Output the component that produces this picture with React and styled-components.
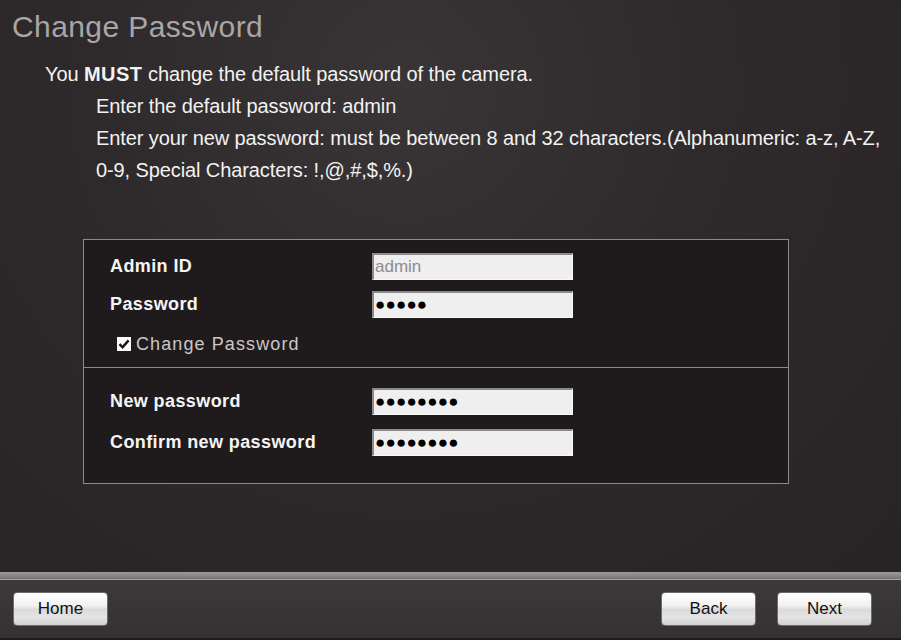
import React from 'react'
import styled, { createGlobalStyle } from 'styled-components'

const GlobalStyle = createGlobalStyle`
  html, body {
    margin: 0;
    padding: 0;
    background: #2b2728;
  }
  body {
    font-family: "Liberation Sans", Arial, sans-serif;
  }
`;

export const Page = styled.div`
  width: 901px;
  height: 640px;
  display: flex;
  flex-direction: column;
  overflow: hidden;
`;

export const Main = styled.div`
  height: 572px;
  box-sizing: border-box;
  background: radial-gradient(ellipse at 45% 15%, #393536 0%, #2e2a2b 45%, #282425 100%);
  display: flex;
  flex-direction: column;
`;

export const Title = styled.h1`
  margin: 10px 0 0 12px;
  font-size: 30px;
  line-height: 34px;
  font-weight: 400;
  letter-spacing: 0.4px;
  color: #a8a6a6;
`;

export const Intro = styled.div`
  margin: 14px 0 0 45px;
  font-size: 20px;
  line-height: 32px;
  letter-spacing: -0.1px;
  color: #f2f2f2;

  b {
    font-weight: 700;
    letter-spacing: 0.5px;
  }
`;

export const Indent = styled.div`
  padding-left: 51px;
`;

export const Box = styled.div`
  margin: 53px 0 0 83px;
  width: 706px;
  box-sizing: border-box;
  border: 1px solid #8d8a8a;
  background: #1f1b1c;
`;

export const Section = styled.div`
  padding: ${p => p.$pad};
  border-top: ${p => (p.$divided ? '1px solid #8d8a8a' : 'none')};
  display: grid;
  grid-template-columns: 262px 201px;
  row-gap: ${p => p.$gap}px;
  padding-left: 26px;
`;

export const Label = styled.label`
  font-size: 18px;
  font-weight: 700;
  letter-spacing: 0.4px;
  color: #f4f4f4;
  display: flex;
  align-items: center;
`;

export const Field = styled.div`
  height: 27px;
  box-sizing: border-box;
  background: #efefef;
  border-top: 2px solid #8a8a8a;
  border-left: 2px solid #8a8a8a;
  border-right: 1px solid #f8f8f8;
  border-bottom: 1px solid #f8f8f8;
  padding-left: 1px;
  display: flex;
  align-items: center;
  font-size: 17px;
  color: ${p => (p.$muted ? '#8c8c8c' : '#000')};
  letter-spacing: ${p => (p.$dots ? '0.2px' : '0')};
  overflow: hidden;
  white-space: nowrap;
`;

export const CheckRow = styled.div`
  grid-column: 1 / -1;
  margin-top: 4px;
  padding-left: 7px;
  height: 22px;
  display: flex;
  align-items: center;
  gap: 5px;
  font-size: 18px;
  letter-spacing: 1.1px;
  color: #c9c7c7;
`;

export const CheckBox = styled.span`
  width: 14px;
  height: 14px;
  background: #fafafa;
  display: flex;
  align-items: center;
  justify-content: center;
`;

export const Rule = styled.div`
  height: 8px;
  box-sizing: border-box;
  background: linear-gradient(#9a9898, #868484 60%, #6f6d6d);
  border-bottom: 1px solid #a5a3a3;
`;

export const Footer = styled.div`
  flex: 1;
  background: linear-gradient(#3c393a, #353132);
  border-bottom: 2px solid #1e1b1c;
  display: flex;
  align-items: flex-start;
  padding: 12px 29px 0 13px;
  gap: 21px;
`;

export const Spacer = styled.div`
  flex: 1;
`;

export const Button = styled.button`
  width: 95px;
  height: 34px;
  box-sizing: border-box;
  border: 1px solid #6c6a6a;
  border-radius: 4px;
  background: linear-gradient(#ffffff 0%, #f1f1f1 40%, #d9d9d9 52%, #e4e4e4 75%, #d2d2d2 100%);
  box-shadow: inset 0 1px 0 #fff;
  font-family: "Liberation Sans", Arial, sans-serif;
  font-size: 17px;
  color: #111;
  padding: 0;
  cursor: pointer;
`;

function Check() {
  return (
    <svg width="12" height="12" viewBox="0 0 12 12">
      <path d="M1.5 6.2 L4.6 9.3 L10.6 2.4" fill="none" stroke="#111" strokeWidth="2.4" />
    </svg>
  )
}

export default function App() {
  return (
    <Page>
      <GlobalStyle />
      <Main>
        <Title>Change Password</Title>
        <Intro>
          <div>You <b>MUST</b> change the default password of the camera.</div>
          <Indent>
            <div>Enter the default password: admin</div>
            <div>Enter your new password: must be between 8 and 32 characters.(Alphanumeric: a-z, A-Z, 0-9, Special Characters: !,@,#,$,%.)</div>
          </Indent>
        </Intro>

        <Box>
          <Section $pad="13px 0 12px" $gap={11}>
            <Label>Admin ID</Label>
            <Field $muted>admin</Field>
            <Label>Password</Label>
            <Field $dots>●●●●●</Field>
            <CheckRow>
              <CheckBox><Check /></CheckBox>
              Change Password
            </CheckRow>
          </Section>
          <Section $divided $pad="20px 0 27px" $gap={14}>
            <Label>New password</Label>
            <Field $dots>●●●●●●●●</Field>
            <Label>Confirm new password</Label>
            <Field $dots>●●●●●●●●</Field>
          </Section>
        </Box>
      </Main>
      <Rule />
      <Footer>
        <Button>Home</Button>
        <Spacer />
        <Button>Back</Button>
        <Button>Next</Button>
      </Footer>
    </Page>
  )
}
